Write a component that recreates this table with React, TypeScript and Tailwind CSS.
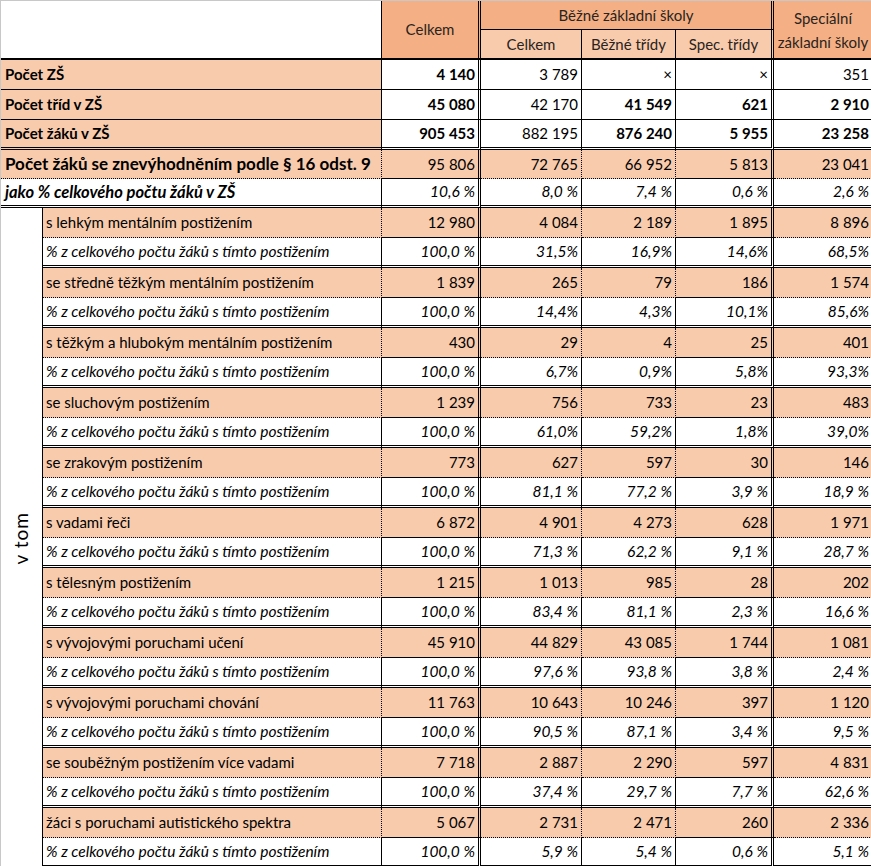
import React from "react";

type Cat = { label: string; vals: string[]; pct: string[] };

const cats: Cat[] = [
  { label: "s lehkým mentálním postižením", vals: ["12 980", "4 084", "2 189", "1 895", "8 896"], pct: ["100,0 %", "31,5%", "16,9%", "14,6%", "68,5%"] },
  { label: "se středně těžkým mentálním postižením", vals: ["1 839", "265", "79", "186", "1 574"], pct: ["100,0 %", "14,4%", "4,3%", "10,1%", "85,6%"] },
  { label: "s těžkým a hlubokým mentálním postižením", vals: ["430", "29", "4", "25", "401"], pct: ["100,0 %", "6,7%", "0,9%", "5,8%", "93,3%"] },
  { label: "se sluchovým postižením", vals: ["1 239", "756", "733", "23", "483"], pct: ["100,0 %", "61,0%", "59,2%", "1,8%", "39,0%"] },
  { label: "se zrakovým postižením", vals: ["773", "627", "597", "30", "146"], pct: ["100,0 %", "81,1 %", "77,2 %", "3,9 %", "18,9 %"] },
  { label: "s vadami řeči", vals: ["6 872", "4 901", "4 273", "628", "1 971"], pct: ["100,0 %", "71,3 %", "62,2 %", "9,1 %", "28,7 %"] },
  { label: "s tělesným postižením", vals: ["1 215", "1 013", "985", "28", "202"], pct: ["100,0 %", "83,4 %", "81,1 %", "2,3 %", "16,6 %"] },
  { label: "s vývojovými poruchami učení", vals: ["45 910", "44 829", "43 085", "1 744", "1 081"], pct: ["100,0 %", "97,6 %", "93,8 %", "3,8 %", "2,4 %"] },
  { label: "s vývojovými poruchami chování", vals: ["11 763", "10 643", "10 246", "397", "1 120"], pct: ["100,0 %", "90,5 %", "87,1 %", "3,4 %", "9,5 %"] },
  { label: "se souběžným postižením více vadami", vals: ["7 718", "2 887", "2 290", "597", "4 831"], pct: ["100,0 %", "37,4 %", "29,7 %", "7,7 %", "62,6 %"] },
  { label: "žáci s poruchami autistického spektra", vals: ["5 067", "2 731", "2 471", "260", "2 336"], pct: ["100,0 %", "5,9 %", "5,4 %", "0,6 %", "5,1 %"] },
];

// right border per value column (double after Celkem and after Spec. třídy)
const colBorder = [
  "border-r-[3px] border-r-black border-double",
  "border-r border-r-black",
  "border-r border-r-black",
  "border-r-[3px] border-r-black border-double",
  "",
];

const top3 = [
  { label: "Počet ZŠ", vals: ["4 140", "3 789", "×", "×", "351"], bold: [true, false, false, false, false] },
  { label: "Počet tříd v ZŠ", vals: ["45 080", "42 170", "41 549", "621", "2 910"], bold: [true, false, true, true, true] },
  { label: "Počet žáků v ZŠ", vals: ["905 453", "882 195", "876 240", "5 955", "23 258"], bold: [true, false, true, true, true] },
];

function Vals({ vals, bg, bottom, italic, bold }: { vals: string[]; bg: string; bottom: string; italic?: boolean; bold?: boolean[] }) {
  return (
    <>
      {vals.map((v, i) => (
        <div
          key={i}
          className={`${bg} ${bottom} ${colBorder[i]} flex items-center justify-end pr-[3px] ${italic ? "italic text-[15.5px]" : "text-[15px]"} ${bold && bold[i] ? "font-bold" : ""}`}
        >
          {v}
        </div>
      ))}
    </>
  );
}

export default function App() {
  const salmon = "bg-[#f8cbad]";
  const dark = "bg-[#f4b084]";
  return (
    <div className="w-[871px] bg-white text-black border-t border-l border-[#c8c8c8]" style={{ fontFamily: "Lato, 'Noto Sans', sans-serif" }}>
      {/* header */}
      <div className="grid grid-cols-[381px_99px_101px_94px_98px_98px] grid-rows-[29px_28px] border-b-2 border-b-black text-[15px] text-[#2a2320]">
        <div className="row-span-2 border-r border-r-black bg-white" />
        <div className={`row-span-2 ${dark} border-r-[3px] border-r-black border-double flex items-center justify-center`}>Celkem</div>
        <div className={`col-span-3 ${dark} border-r-[3px] border-r-black border-double border-b border-b-black flex items-center justify-center`}>Běžné základní školy</div>
        <div className={`row-span-2 ${dark} flex flex-col items-center justify-center leading-[24px]`}>
          <span>Speciální</span>
          <span className="whitespace-nowrap">základní školy</span>
        </div>
        <div className={`${salmon} border-r border-r-black flex items-center justify-center`}>Celkem</div>
        <div className={`${salmon} border-r border-r-black flex items-center justify-center`}>Běžné třídy</div>
        <div className={`${salmon} border-r-[3px] border-r-black border-double flex items-center justify-center`}>Spec. třídy</div>
      </div>

      {/* summary rows */}
      <div className="grid grid-cols-[381px_99px_101px_94px_98px_98px]">
        {top3.map((r, idx) => (
          <React.Fragment key={r.label}>
            <div className={`${salmon} h-[30px] border-r border-r-black ${idx === 2 ? "border-b-[3px] border-b-black border-double" : "border-b border-b-black"} flex items-center pl-[4px] text-[15px] font-bold`}>
              {r.label}
            </div>
            <Vals vals={r.vals} bg="bg-white" bold={r.bold} bottom={idx === 2 ? "border-b-[3px] border-b-black border-double" : "border-b border-b-black"} />
          </React.Fragment>
        ))}
        <div className={`${salmon} h-[29px] border-r border-r-black border-b border-dotted border-b-black flex items-center pl-[4px] text-[17px] font-bold`}>
          Počet žáků se znevýhodněním podle § 16 odst. 9
        </div>
        <Vals vals={["95 806", "72 765", "66 952", "5 813", "23 041"]} bg={salmon} bottom="border-b border-dotted border-b-black" />
        <div className="bg-white h-[29px] border-r border-r-black border-b-[3px] border-b-black border-double flex items-center pl-[4px] text-[16.5px] font-bold italic">
          jako % celkového počtu žáků v ZŠ
        </div>
        <Vals vals={["10,6 %", "8,0 %", "7,4 %", "0,6 %", "2,6 %"]} bg="bg-white" italic bottom="border-b-[3px] border-b-black border-double" />
      </div>

      {/* breakdown */}
      <div className="flex">
        <div className="w-[42px] shrink-0 border-r border-r-black flex items-center justify-center">
          <span className="-rotate-90 whitespace-nowrap text-[19px] tracking-[1px]">v tom</span>
        </div>
        <div className="grid grid-cols-[339px_99px_101px_94px_98px_98px] w-[829px]">
          {cats.map((c) => (
            <React.Fragment key={c.label}>
              <div className={`${salmon} h-[30px] border-r border-r-black border-b border-dotted border-b-black flex items-center pl-[3px] text-[15px]`}>
                {c.label}
              </div>
              <Vals vals={c.vals} bg={salmon} bottom="border-b border-dotted border-b-black" />
              <div className="bg-white h-[30px] border-r border-r-black border-b-[3px] border-b-black border-double flex items-center pl-[3px] text-[15.5px] italic">
                % z celkového počtu žáků s tímto postižením
              </div>
              <Vals vals={c.pct} bg="bg-white" italic bottom="border-b-[3px] border-b-black border-double" />
            </React.Fragment>
          ))}
        </div>
      </div>
    </div>
  );
}
